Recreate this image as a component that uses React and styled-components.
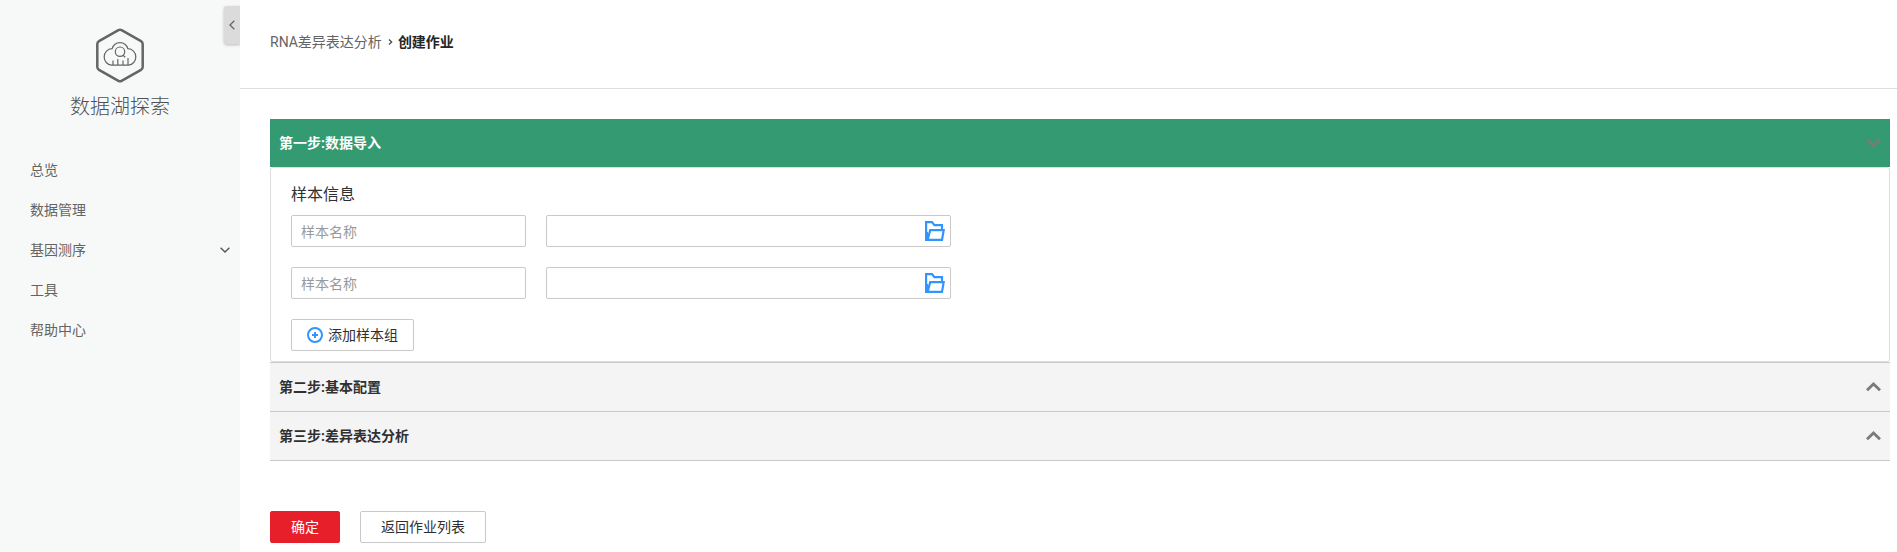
import React from "react";
import styled, { createGlobalStyle, css } from "styled-components";

const GlobalStyle = createGlobalStyle`
  *, *::before, *::after { box-sizing: border-box; }
  body {
    margin: 0;
    background: #fff;
    color: #252b3a;
    font: 400 14px/20px Roboto, "Noto Sans CJK SC", sans-serif;
  }
  input, button { font: inherit; }
`;

const Page = styled.div`
  display: flex;
  height: 552px;
  overflow: hidden;
`;

const Sidebar = styled.aside`
  position: relative;
  flex: 0 0 240px;
  background: #f7f9f9;
  color: #646464;
`;

const CollapseButton = styled.button`
  position: absolute;
  top: 6px;
  right: 0;
  width: 16px;
  height: 38px;
  display: flex;
  align-items: center;
  justify-content: center;
  padding: 0;
  border: 0;
  border-radius: 3px 0 0 3px;
  background: #dbdbdb;
  box-shadow: 0 1px 3px rgba(0, 0, 0, 0.25);
  clip-path: inset(-4px 0 -4px -4px);
`;

const Brand = styled.div`
  display: flex;
  flex-direction: column;
  align-items: center;
  padding-top: 28px;
`;

const BrandName = styled.div`
  margin-top: 9px;
  font-size: 20px;
  font-weight: 300;
  line-height: 30px;
  color: #505050;
`;

const Nav = styled.nav`
  margin-top: 28px;
`;

const NavItem = styled.a`
  display: flex;
  align-items: center;
  justify-content: space-between;
  height: 40px;
  padding: 0 10px 0 30px;
`;

const Main = styled.main`
  flex: 1;
  min-width: 0;
`;

const Breadcrumb = styled.header`
  display: flex;
  align-items: center;
  height: 89px;
  padding: 0 30px 5px;
  border-bottom: 1px solid #dedede;
  color: #646464;
`;

const Parent = styled.span`
  font-family: Roboto, "Noto Sans CJK SC", sans-serif;
`;

const CrumbArrow = styled.svg`
  margin: 1px 5px 0 6px;
`;

const Current = styled.span`
  color: #252525;
  font-weight: 700;
`;

const Content = styled.div`
  padding: 30px 7px 0 30px;
`;

const StepHeader = styled.div`
  display: flex;
  align-items: center;
  justify-content: space-between;
  height: 49px;
  padding: 0 9px;
  font-weight: 700;
  color: #303030;
  background: #f4f4f4;
  border-top: 1px solid #c9c9c9;
  ${({ $last }) => $last && css`
    height: 50px;
    border-bottom: 1px solid #c9c9c9;
  `}
  ${({ $active }) => $active && css`
    height: 48px;
    color: #fff;
    background: #349a72;
    border: 0;
  `}
`;

const StepBody = styled.section`
  height: 195px;
  padding: 15px 20px 0;
  border: 1px solid #dedede;
  border-radius: 3px;
`;

const SectionTitle = styled.div`
  margin-bottom: 8px;
  font-size: 16px;
  line-height: 24px;
  color: #303030;
`;

const SampleRow = styled.div`
  display: flex;
  gap: 20px;
  margin-bottom: 20px;
`;

const frame = css`
  height: 32px;
  border: 1px solid #c9c9c9;
  border-radius: 2px;
  background: #fff;
`;

const NameInput = styled.input`
  ${frame}
  width: 235px;
  padding: 1px 9px 0;
  outline: 0;
  &::placeholder { color: #999; opacity: 1; }
`;

const FileField = styled.div`
  ${frame}
  width: 405px;
  display: flex;
  align-items: center;
  justify-content: flex-end;
  padding-right: 5px;
`;

const Button = styled.button`
  ${frame}
  display: flex;
  align-items: center;
  justify-content: center;
  gap: 5px;
  width: ${({ $width }) => $width}px;
  padding: 0;
  color: #303030;
  ${({ $primary }) => $primary && css`
    color: #fff;
    background: #e61f2b;
    border-color: #e61f2b;
  `}
`;

const Actions = styled.div`
  display: flex;
  gap: 20px;
  margin-top: 50px;
`;

const Logo = () => (
  <svg width="48" height="55" viewBox="0 0 48 55" fill="none" stroke="#646666">
    <path d="M22.4 2.1Q24 1.2 25.6 2.1L45 13.1Q46.7 14.1 46.7 16V39Q46.7 40.9 45 41.9L25.6 52.9Q24 53.8 22.4 52.9L3 41.9Q1.3 40.9 1.3 39V16Q1.3 14.1 3 13.1Z" strokeWidth="2.5" />
    <path d="M16 37.2H15.5A8.2 8.2 0 0 1 8.2 29C8.2 24.3 11.6 20.7 16.1 20.7C17.3 17 20.3 14.6 24 14.6S30.7 17 31.9 20.7C36.4 20.7 39.8 24.3 39.8 29A8.2 8.2 0 0 1 32.5 37.2Z" strokeWidth="1.2" />
    <circle cx="24" cy="23.7" r="4.7" strokeWidth="1.2" />
    <path d="M26.8 27L29.2 29.2M17 32.5V37M21.8 31V37M27 32.5V37M32 30V37" strokeWidth="1.2" />
  </svg>
);

const FolderIcon = () => (
  <svg width="20" height="20" viewBox="0 0 20 20" fill="none" stroke="#3294ff" strokeWidth="2.2">
    <path d="M2.4 18.9H1.1V1.1H7L9.4 4.1H17V8" />
    <path d="M5.2 9.1H18.7L17 18.9H2.6Z" />
    <path d="M2 11V18.5" strokeWidth="2" />
  </svg>
);

const PlusIcon = () => (
  <svg width="16" height="16" viewBox="0 0 16 16" fill="none" stroke="#3294ff">
    <circle cx="8" cy="8" r="7" strokeWidth="2" />
    <path d="M5 8H11M8 5V11" strokeWidth="2" />
  </svg>
);

const StepArrow = ({ open }) => (
  <svg width="15" height="10" viewBox="0 0 15 10" fill="none" stroke="#7a7a7a" strokeWidth="2.8">
    <path d={open ? "M1 1.3L7.5 7.5L14 1.3" : "M1 8.2L7.5 2L14 8.2"} />
  </svg>
);

const navItems = [
  { label: "总览" },
  { label: "数据管理" },
  { label: "基因测序", expandable: true },
  { label: "工具" },
  { label: "帮助中心" },
];

export default function App() {
  return (
    <Page>
      <GlobalStyle />
      <Sidebar>
        <CollapseButton>
          <svg width="6" height="10" viewBox="0 0 6 10" fill="none" stroke="#666" strokeWidth="1.3">
            <path d="M5.3 .8L1 5L5.3 9.2" />
          </svg>
        </CollapseButton>
        <Brand>
          <Logo />
          <BrandName>数据湖探索</BrandName>
        </Brand>
        <Nav>
          {navItems.map(({ label, expandable }) => (
            <NavItem key={label}>
              {label}
              {expandable && (
                <svg width="10" height="6" viewBox="0 0 10 6" fill="none" stroke="#5a5a5a" strokeWidth="1.5">
                  <path d="M.6 .7L5 5L9.4 .7" />
                </svg>
              )}
            </NavItem>
          ))}
        </Nav>
      </Sidebar>
      <Main>
        <Breadcrumb>
          <Parent>RNA差异表达分析</Parent>
          <CrumbArrow width="5" height="6" viewBox="0 0 5 6" fill="none" stroke="#444" strokeWidth="1.2">
            <path d="M1 .5L3.7 3L1 5.5" />
          </CrumbArrow>
          <Current>创建作业</Current>
        </Breadcrumb>
        <Content>
          <StepHeader $active>
            第一步:数据导入
            <StepArrow open />
          </StepHeader>
          <StepBody>
            <SectionTitle>样本信息</SectionTitle>
            {[0, 1].map((row) => (
              <SampleRow key={row}>
                <NameInput placeholder="样本名称" />
                <FileField>
                  <FolderIcon />
                </FileField>
              </SampleRow>
            ))}
            <Button $width={123}>
              <PlusIcon />
              添加样本组
            </Button>
          </StepBody>
          <StepHeader>
            第二步:基本配置
            <StepArrow />
          </StepHeader>
          <StepHeader $last>
            第三步:差异表达分析
            <StepArrow />
          </StepHeader>
          <Actions>
            <Button $width={70} $primary>确定</Button>
            <Button $width={126}>返回作业列表</Button>
          </Actions>
        </Content>
      </Main>
    </Page>
  );
}
